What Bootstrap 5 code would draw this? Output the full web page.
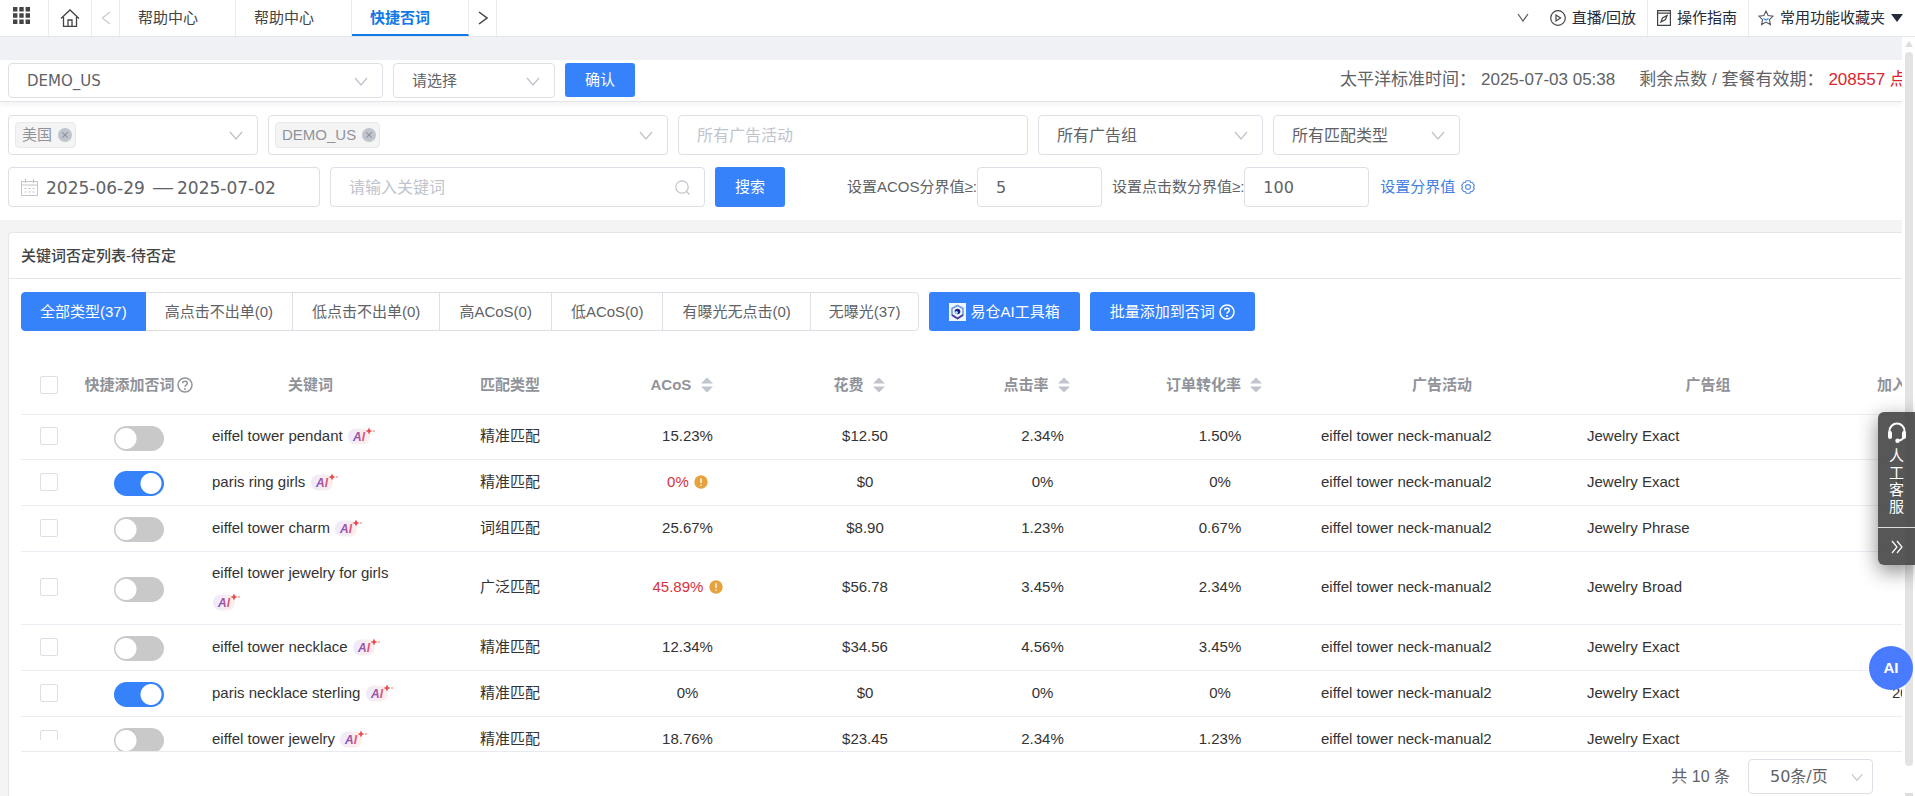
<!DOCTYPE html>
<html lang="zh-CN">
<head>
<meta charset="utf-8">
<meta name="viewport" content="width=device-width, initial-scale=1">
<title>快捷否词</title>
<link href="https://cdn.jsdelivr.net/npm/bootstrap@5.3.0/dist/css/bootstrap.min.css" rel="stylesheet">
<style>
:root{--brand:#3582fb;--line:#dcdfe6;--rule:#ebeef5;--ink:#606266;--mute:#909399;--hint:#c0c4cc}
html,body{height:100%}
body{font:15px/20px "Liberation Sans","Noto Sans CJK SC",sans-serif;color:var(--ink);overflow:hidden}
svg{display:block;flex:none}
a{text-decoration:none;color:inherit}
.topbar{height:37px;border-bottom:1px solid #e4e7ed;flex:none;color:#444}
.topbar>*{border-right:1px solid #ebebeb}
.icon-cell{background:none;border:0;border-right:1px solid #ebebeb;padding:0}
.w-menu{width:49px;padding:0 6px 5px 0}.w-home{width:43px}.w-prev{width:28px}.w-next{width:28px}
.w-more{border:0;padding:0 12px 2px}
.page-tab{width:116px;padding-left:18px;padding-bottom:8px;display:flex;align-items:flex-end}
.page-tab.on{color:#1278e6;font-weight:700;border-bottom:2px solid #1278e6;padding-bottom:6px;width:117px}
.top-links{border-right:0;color:#252b3a}
.top-links a{display:flex;align-items:center;gap:6px;padding:0 11px 1px 9px;border-left:1px solid #ebebeb}
.top-links a:first-of-type{border-left:0}
.top-links a:last-child{padding-right:12px}
.scroller{width:13px;background:#fff;padding:4px 3px 0 3px}
.thumb{background:#e3e3e3;border-radius:4px;margin:5px 0 27px;width:8px}
.band{height:23px;background:#eff1f5;flex:none}
.shopbar{height:42px;padding:3px 0 0 8px;gap:10px;border-bottom:1px solid #e3e6e8;box-shadow:0 3px 6px #0000000d;position:relative;flex:none;overflow:hidden}
.shopbar .box{height:35px}
.status{font-size:17px;line-height:24px;width:562px;padding-top:5px}
.status b{font-weight:400;margin-left:5px}
.box{border:1px solid var(--line);border-radius:4px;background:#fff;height:40px;display:flex;align-items:center;position:relative}
.box>input,.box>select{border:0;outline:0;background:transparent;width:100%;height:100%;padding:1px 18px 0;color:var(--ink);font-size:16px;appearance:none;min-width:0}
.box>svg{position:absolute;right:14px;pointer-events:none}
.shopbar .box>select{font-size:15px;padding-top:0}
.box>input.day{font-size:17px;padding:2px 0 0}
.dash{font:20px/20px "Liberation Sans",sans-serif}
.dv{font-family:"DejaVu Sans","Noto Sans CJK SC",sans-serif}
::placeholder{color:var(--hint)!important;opacity:1}
.btn-brand{background:var(--brand);border:0;border-radius:3px;color:#fff;font-size:15px;line-height:20px;padding:0 20px}
.btn-brand:hover{background:#2a74e8;color:#fff}
.filters{padding:13px 0 13px 8px;flex:none}
.filters .rowline{display:flex;gap:10px}
.chip{display:flex;align-items:center;gap:6px;height:26px;border:1px solid #e9e9eb;background:#f4f4f5;color:var(--mute);border-radius:4px;padding:0 3px 0 6px;margin-left:6px}
.board-wrap{background:#f4f4f5;padding:12px 0 0 8px;min-height:0}
.board{background:#fff;border:1px solid #e4e6ea;border-right:0;border-bottom:0;border-radius:4px 0 0 0;min-height:0}
.board-title{height:46px;line-height:46px;padding-left:12px;font-weight:500;color:#444;border-bottom:1px solid #e4e6ea;font-size:15px;margin:0;flex:none}
.tools{padding:13px 0 0 12px;flex:none;height:69px}
.kinds .btn{border:1px solid var(--line);color:var(--ink);height:39px;font-size:15px;line-height:20px;padding:0 19px;border-radius:0;background:#fff}
.kinds .btn:first-child{border-radius:4px 0 0 4px;padding:0 18px}.kinds .btn:last-child{border-radius:0 4px 4px 0;padding:0 18px}
.kinds .btn.active{background:var(--brand);border-color:var(--brand);color:#fff}
.grid-wrap{margin-left:12px;border-bottom:1px solid #e8eaef;overflow:hidden;min-height:0;position:relative}
.grid-mask{position:absolute;left:0;bottom:0;width:56px;height:11px;background:#fff}
.kw{table-layout:fixed;min-width:1982px;width:100%;border-collapse:separate;border-spacing:0;color:#333}
.kw th{height:67px;padding:8px 0 0;text-align:center;color:var(--mute);font-weight:700;border-bottom:1px solid var(--rule);vertical-align:middle;line-height:20px}
.kw td{height:46px;padding:0 12px 2px;border-bottom:1px solid var(--rule);text-align:center;vertical-align:middle}
.kw tr:first-child td{height:45px}
.kw td.l{text-align:left}
.kw td.tall{height:73px;line-height:29px}
.kw td.join{text-align:left;padding-left:51px;white-space:nowrap}
.kw input.form-check-input[type=checkbox]:not(.sw){width:18px;height:18px;border:1px solid var(--line);border-radius:2px;display:block;margin:0 auto}
.sw{appearance:none;width:50px;height:25px;border-radius:13px;background:#c9c9c9 radial-gradient(circle at 12px 50%,#fff 10px,transparent 11px);display:block;margin:4px auto 0;border:0}
.sw:checked{background:var(--brand) radial-gradient(circle at 37px 50%,#fff 10px,transparent 11px)}
.kw .inl{display:inline-block;vertical-align:-3px}
.kw .sorter{margin:0 12px 0 5px}
.kw .ai-tag{margin-left:1px;vertical-align:-4px}
.kw .bang{vertical-align:-2px;margin-left:1px}
.warn{color:#d9303e}
.pager{height:44px;padding:7px 29px 0 0;gap:18px;flex:none;font-size:16px}
.pager .box{width:125px;height:35px}
.pager .box>select{padding-left:21px}
.pager .box>svg{right:9px}
.help-dock{position:absolute;right:0;top:412px;width:37px;background:rgba(64,64,64,.88);border-radius:6px 0 0 6px;color:#fff;box-shadow:0 6px 20px #0007}
.help-dock a{display:flex;flex-direction:column;align-items:center;color:#fff;height:115px;padding-top:10px;line-height:17px}
.help-dock a span{width:15px;padding-top:4px}
.help-dock button{background:none;border:0;border-top:1px solid #ddd;color:#fff;width:100%;height:38px;display:flex;align-items:center;justify-content:center}
.ai-ball{position:absolute;right:2px;top:646px;width:44px;height:44px;border-radius:50%;border:0;background:#487bff;color:#fff;font-weight:700;font-size:15px}
</style>
</head>
<body class="d-flex flex-column bg-white">
<svg width="0" height="0" class="position-absolute">
<defs>
<linearGradient id="aig" x1="0" x2="1"><stop offset="0" stop-color="#5a4fd0"/><stop offset="1" stop-color="#f2566b"/></linearGradient>
<linearGradient id="aibg" x1="0" x2="1"><stop offset="0" stop-color="#efe9fb"/><stop offset="1" stop-color="#fdf0ea"/></linearGradient>
<symbol id="down" viewBox="0 0 14 14"><path d="M1 4l6 7 6-7" fill="none" stroke="#c0c4cc" stroke-width="1.4"/></symbol>
<symbol id="ai" viewBox="0 0 28 18"><rect x="0" y="1.500" width="22" height="16" rx="7.500" fill="url(#aibg)"/><text x="5" y="14" font-size="12" font-weight="700" font-style="italic" font-family="Liberation Sans" fill="url(#aig)">AI</text><path d="M21 .5l1.100 2.400L24.500 4l-2.400 1.100L21 7.500l-1.100-2.400L17.500 4l2.400-1.100z" fill="#ee4848"/><circle cx="26" cy="4" r="1" fill="#f5a0a0"/></symbol>
<symbol id="sort" viewBox="0 0 12 16"><path d="M0 6.500L6 .5l6 6zM0 9.500l6 6 6-6z" fill="#c0c4cc"/></symbol>
<symbol id="ask" viewBox="0 0 16 16"><circle cx="8" cy="8" r="7" fill="none" stroke="currentColor" stroke-width="1.500"/><path d="M5.700 6.300C5.800 3.400 10.300 3.500 10.300 6.300 10.300 8 8 7.900 8 9.800" fill="none" stroke="currentColor" stroke-width="1.500"/><circle cx="8" cy="11.900" r="1" fill="currentColor"/></symbol>
<symbol id="bang" viewBox="0 0 14 14"><circle cx="7" cy="7" r="6.700" fill="#e6a23c"/><path d="M7 3.300v4.700M7 9.400v1.400" stroke="#fff" stroke-width="1.400"/></symbol>
<symbol id="close" viewBox="0 0 14 14"><circle cx="7" cy="7" r="7" fill="#c0c4cc"/><path d="M4.300 4.300l5.400 5.400M9.700 4.300L4.300 9.700" stroke="#909399" stroke-width="1.100"/></symbol>
</defs></svg>

<nav class="topbar d-flex">
  <button class="icon-cell w-menu" aria-label="菜单"><svg class="mx-auto" width="17" height="17" viewBox="0 0 17 17" fill="#444"><path d="M0 0h4.400v4.400H0zM6.300 0h4.400v4.400H6.300zM12.600 0H17v4.400h-4.400zM0 6.300h4.400v4.400H0zM6.300 6.300h4.400v4.400H6.300zM12.600 6.300H17v4.400h-4.400zM0 12.600h4.400V17H0zM6.300 12.600h4.400V17H6.300zM12.600 12.600H17V17h-4.400z"/></svg></button>
  <button class="icon-cell w-home" aria-label="首页"><svg class="mx-auto" width="20" height="18" viewBox="0 0 20 18" fill="none" stroke="#444" stroke-width="1.300"><path d="M1 9.500L10 1l9 8.500M3.500 8v9.300h13V8M8 17v-6h4v6"/></svg></button>
  <button class="icon-cell w-prev" aria-label="向左"><svg class="mx-auto" width="10" height="14" viewBox="0 0 10 14" fill="none" stroke="#ccc" stroke-width="1.400"><path d="M9 1L1.500 7 9 13"/></svg></button>
  <a class="page-tab" href="#">帮助中心</a>
  <a class="page-tab" href="#">帮助中心</a>
  <a class="page-tab on" href="#">快捷否词</a>
  <button class="icon-cell w-next" aria-label="向右"><svg class="mx-auto" width="10" height="14" viewBox="0 0 10 14" fill="none" stroke="#444" stroke-width="1.500"><path d="M1 1l8 6-8 6"/></svg></button>
  <div class="top-links d-flex ms-auto">
    <button class="icon-cell w-more" aria-label="展开"><svg width="12" height="9" viewBox="0 0 12 9" fill="none" stroke="#555" stroke-width="1.200"><path d="M1 1l5 7 5-7"/></svg></button>
    <a href="#"><svg width="16" height="16" viewBox="0 0 16 16" fill="none" stroke="#444" stroke-width="1.200"><circle cx="8" cy="8" r="7.300"/><path d="M6 5v6l4.600-3z"/></svg>直播/回放</a>
    <a href="#"><svg width="14" height="16" viewBox="0 0 14 16" fill="none" stroke="#444" stroke-width="1.200"><path d="M.6.600h12.800v14.800H.6zM.6 3.200h12.800M4 12l1.500-4L10 5.500 8.500 9.500z"/></svg>操作指南</a>
    <a href="#"><svg width="16" height="16" viewBox="0 0 16 16" fill="none" stroke="#556" stroke-width="1.100"><path d="M8 1l2.100 4.600 5 .6-3.700 3.400 1 5L8 12.100l-4.400 2.500 1-5L.9 6.200l5-.6z"/><path d="M5.500 8.500L8 10l2.500-1.500" stroke="#3582fb"/></svg>常用功能收藏夹<svg width="12" height="8" viewBox="0 0 12 8"><path d="M0 0h12L6 8z" fill="#252b3a"/></svg></a>
  </div>
</nav>

<div class="d-flex flex-fill" style="min-height:0">
<main class="d-flex flex-column flex-fill overflow-hidden">
  <div class="band"></div>
  <section class="shopbar d-flex">
    <div class="box" style="width:375px"><select class="dv" aria-label="店铺"><option>DEMO_US</option></select><svg width="14" height="14"><use href="#down"/></svg></div>
    <div class="box" style="width:162px"><select aria-label="选择"><option>请选择</option></select><svg width="14" height="14"><use href="#down"/></svg></div>
    <button class="btn-brand" style="height:34px">确认</button>
    <div class="status ms-auto text-nowrap overflow-hidden">太平洋标准时间：<b>2025-07-03 05:38</b><span class="ms-4">剩余点数 / 套餐有效期：</span><b style="color:#d9262e">208557 点</b></div>
  </section>
  <form class="filters d-flex flex-column" style="gap:12px">
    <div class="rowline">
      <div class="box" style="width:250px"><span class="chip">美国<svg width="14" height="14"><use href="#close"/></svg></span><svg width="14" height="14"><use href="#down"/></svg></div>
      <div class="box" style="width:400px"><span class="chip">DEMO_US<svg width="14" height="14"><use href="#close"/></svg></span><svg width="14" height="14"><use href="#down"/></svg></div>
      <div class="box" style="width:350px"><input type="text" placeholder="所有广告活动" aria-label="广告活动"></div>
      <div class="box" style="width:225px"><select aria-label="广告组"><option>所有广告组</option></select><svg width="14" height="14"><use href="#down"/></svg></div>
      <div class="box" style="width:187px"><select aria-label="匹配类型"><option>所有匹配类型</option></select><svg width="14" height="14"><use href="#down"/></svg></div>
    </div>
    <div class="rowline align-items-center">
      <div class="box dv" style="width:312px"><svg class="position-static" style="margin-left:12px" width="17" height="17" viewBox="0 0 17 17" fill="none" stroke="#c0c4cc"><path d="M.5 2.500h16v14H.5zM.5 6h16M4.500 0v4M12.500 0v4M3.500 9.500h2m2 0h2m2 0h2M3.500 13h2m2 0h2m2 0h2"/></svg><input class="day ms-2" style="width:103px" value="2025-06-29" aria-label="开始日期"><span class="dash mx-1">—</span><input class="day" style="width:110px" value="2025-07-02" aria-label="结束日期"></div>
      <div class="box" style="width:375px"><input type="text" placeholder="请输入关键词" aria-label="关键词"><svg width="15" height="15" viewBox="0 0 15 15" fill="none" stroke="#c0c4cc" stroke-width="1.200"><circle cx="7" cy="7" r="6.200"/><path d="M11.500 11.500l3 3"/></svg></div>
      <button type="button" class="btn-brand" style="height:40px">搜索</button>
      <div class="d-flex align-items-center text-nowrap" style="margin-left:52px"><label for="acos">设置ACOS分界值≥:</label><div class="box" style="width:125px"><input id="acos" class="dv" value="5"></div></div>
      <div class="d-flex align-items-center text-nowrap"><label for="clicks">设置点击数分界值≥:</label><div class="box" style="width:125px"><input id="clicks" class="dv" value="100"></div></div>
      <a href="#" class="d-flex align-items-center" style="color:#4080e0;gap:6px;padding-left:1px">设置分界值<svg width="14" height="14" viewBox="0 0 15 15" fill="none" stroke="#5b8def" stroke-width="1.200"><path d="M5.500.8h4l.8 1.700 2 .1 2 3.400-1 1.500 1 1.500-2 3.400-2 .1-.8 1.700h-4l-.8-1.700-2-.1-2-3.400 1-1.500-1-1.500 2-3.400 2-.1z"/><circle cx="7.500" cy="7.500" r="2.600"/></svg></a>
    </div>
  </form>
  <div class="board-wrap flex-fill d-flex flex-column">
  <section class="board flex-fill d-flex flex-column">
    <h1 class="board-title">关键词否定列表-待否定</h1>
    <div class="tools d-flex align-items-start" style="gap:10px">
      <div class="kinds btn-group">
        <button class="btn active">全部类型(37)</button><button class="btn">高点击不出单(0)</button><button class="btn">低点击不出单(0)</button><button class="btn">高ACoS(0)</button><button class="btn">低ACoS(0)</button><button class="btn">有曝光无点击(0)</button><button class="btn">无曝光(37)</button>
      </div>
      <button class="btn-brand d-flex align-items-center gap-1" style="height:39px"><svg width="17" height="18" viewBox="0 0 17 18"><path fill="#eef5ff" d="M0 0h17v18H0z"/><path d="M8.500 2.500l5.500 3v6.500l-5.500 3.500L3 12V5.500z" fill="none" stroke="#6d9be8" stroke-width="1.600"/><path d="M3 12l5.500 3.500L14 12" fill="none" stroke="#4a3fa0" stroke-width="1.600"/><circle cx="8.500" cy="8.500" r="2.800" fill="#241f80"/><circle cx="7.500" cy="9.500" r="1.500" fill="#9fe0ff"/></svg>易仓AI工具箱</button>
      <button class="btn-brand d-flex align-items-center gap-1" style="height:39px">批量添加到否词<svg width="16" height="16"><use href="#ask"/></svg></button>
    </div>
    <div class="grid-wrap flex-fill">
      <table class="kw">
        <colgroup><col style="width:56px"><col style="width:123px"><col style="width:221px"><col style="width:178px"><col style="width:177px"><col style="width:178px"><col style="width:177px"><col style="width:178px"><col style="width:266px"><col style="width:266px"><col style="width:162px"></colgroup>
        <thead><tr><th><input type="checkbox" class="form-check-input" aria-label="全选"></th><th class="text-nowrap">快捷添加否词 <svg class="inl" style="margin-left:-2px" width="16" height="16"><use href="#ask"/></svg></th><th>关键词</th><th>匹配类型</th><th>ACoS <svg class="inl sorter" width="12" height="16"><use href="#sort"/></svg></th><th>花费 <svg class="inl sorter" width="12" height="16"><use href="#sort"/></svg></th><th>点击率 <svg class="inl sorter" width="12" height="16"><use href="#sort"/></svg></th><th>订单转化率 <svg class="inl sorter" width="12" height="16"><use href="#sort"/></svg></th><th>广告活动</th><th>广告组</th><th>加入否词时间</th></tr></thead>
        <tbody id="rows"></tbody>
      </table>
      <div class="grid-mask"></div>
    </div>
    <div class="pager d-flex justify-content-end"><span style="padding-top:8px">共 10 条</span><div class="box"><select class="dv" aria-label="每页条数"><option>50条/页</option></select><svg width="12" height="12"><use href="#down"/></svg></div></div>
  </section>
  </div>
</main>
<div class="scroller d-flex flex-column flex-shrink-0" aria-hidden="true"><svg width="8" height="6" viewBox="0 0 8 6"><path d="M4 0l4 6H0z" fill="#ddd"/></svg><div class="thumb flex-fill"></div><svg width="8" height="3"><path d="M0 0h8v3H0z" fill="#ddd"/></svg></div>
</div>

<aside class="help-dock"><a href="#"><svg width="20" height="21" viewBox="0 0 20 21" fill="none" stroke="#fff" stroke-width="2"><path d="M2.500 12V9a7.500 7.500 0 0 1 15 0v3.500q0 5-6 6.200"/><path d="M3 11v4M17 11v4" stroke-width="4" stroke-linecap="round"/><circle cx="10.500" cy="18.700" r="1.200" fill="#fff"/></svg><span>人工客服</span></a><button aria-label="收起"><svg width="12" height="14" viewBox="0 0 12 14" fill="none" stroke="#fff" stroke-width="1.200"><path d="M1 1l5 6-5 6M6 1l5 6-5 6"/></svg></button></aside>
<button class="ai-ball p-0">AI</button>

<script>
const rows = [
 [0,'eiffel tower pendant','精准匹配','15.23%',0,'$12.50','2.34%','1.50%','Jewelry Exact',''],
 [1,'paris ring girls','精准匹配','0%',1,'$0','0%','0%','Jewelry Exact','2025-07-01'],
 [0,'eiffel tower charm','词组匹配','25.67%',0,'$8.90','1.23%','0.67%','Jewelry Phrase',''],
 [0,'eiffel tower jewelry for girls','广泛匹配','45.89%',1,'$56.78','3.45%','2.34%','Jewelry Broad',''],
 [0,'eiffel tower necklace','精准匹配','12.34%',0,'$34.56','4.56%','3.45%','Jewelry Exact',''],
 [1,'paris necklace sterling','精准匹配','0%',0,'$0','0%','0%','Jewelry Exact','2025-07-01'],
 [0,'eiffel tower jewelry','精准匹配','18.76%',0,'$23.45','2.34%','1.23%','Jewelry Exact','']
];
const ai = '<svg class="inl ai-tag" width="28" height="18"><use href="#ai"/></svg>';
const bang = ' <svg class="inl bang" width="14" height="14"><use href="#bang"/></svg>';
document.getElementById('rows').innerHTML = rows.map(r => `<tr>
<td><input type="checkbox" class="form-check-input" aria-label="选择 ${r[1]}"></td>
<td><input type="checkbox" role="switch" class="sw" aria-label="添加 ${r[1]}" ${r[0] ? 'checked' : ''}></td>
<td class="l ${r[1].length > 25 ? 'tall' : ''}">${r[1]} ${ai}</td><td>${r[2]}</td>
<td class="${r[4] ? 'warn' : ''}">${r[3]}${r[4] ? bang : ''}</td><td>${r[5]}</td><td>${r[6]}</td><td>${r[7]}</td>
<td class="l">eiffel tower neck-manual2</td><td class="l">${r[8]}</td><td class="join">${r[9]}</td></tr>`).join('');
</script>
<script src="https://cdn.jsdelivr.net/npm/bootstrap@5.3.0/dist/js/bootstrap.bundle.min.js"></script>
</body>
</html>
